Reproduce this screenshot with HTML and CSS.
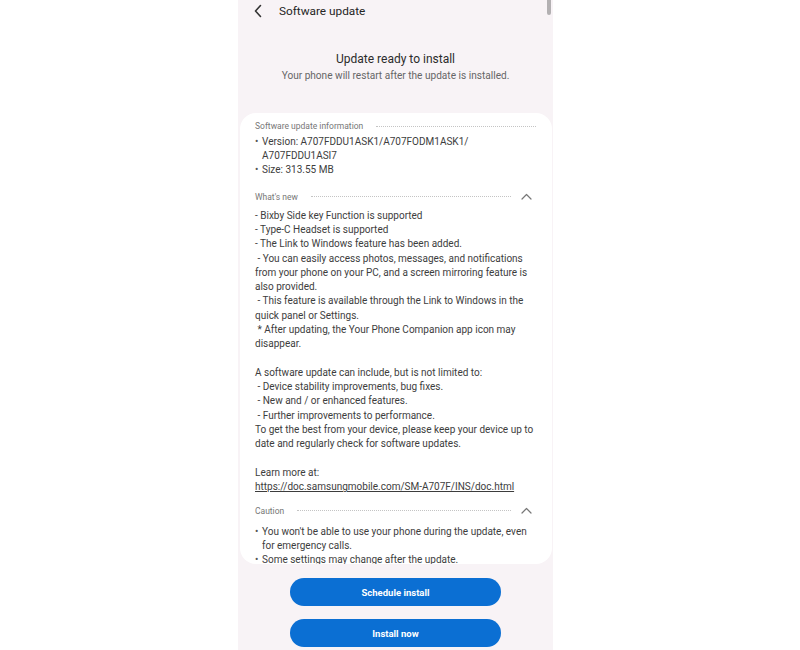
FILE: index.html
```html
<!DOCTYPE html>
<html lang="en">

<head>
    <meta charset="UTF-8">
    <meta name="viewport" content="width=device-width, initial-scale=1.0">
    <title>Software update</title>

    <link rel="stylesheet" href="styles.css">
</head>

<body>

    <div id="phone">
        <div class="scrollbar"></div>

        <div class="topbar">
            <svg class="back" width="10" height="14" viewBox="0 0 10 14">
                <path d="M7.5 1.5 L2.5 7 L7.5 12.5" fill="none" stroke="#333" stroke-width="1.6" stroke-linecap="round" stroke-linejoin="round" />
            </svg>
            <span class="title">Software update</span>
        </div>

        <div class="ready">
            <div class="ready-title">Update ready to install</div>
            <div class="ready-sub">Your phone will restart after the update is installed.</div>
        </div>

        <div class="card">
            <div class="sect first">
                <span>Software update information</span>
                <span class="dots"></span>
            </div>
            <ul class="bullets">
                <li>Version: A707FDDU1ASK1/A707FODM1ASK1/<br>A707FDDU1ASI7</li>
                <li>Size: 313.55 MB</li>
            </ul>

            <div class="sect">
                <span>What's new</span>
                <span class="dots"></span>
                <svg class="up" width="11" height="7" viewBox="0 0 11 7">
                    <path d="M1 6 L5.5 1.5 L10 6" fill="none" stroke="#777" stroke-width="1.2" stroke-linecap="round" stroke-linejoin="round" />
                </svg>
            </div>
            <div class="notes">
                - Bixby Side key Function is supported<br>
                - Type-C Headset is supported<br>
                - The Link to Windows feature has been added.<br>
                &nbsp;- You can easily access photos, messages, and notifications<br>
                from your phone on your PC, and a screen mirroring feature is<br>
                also provided.<br>
                &nbsp;- This feature is available through the Link to Windows in the<br>
                quick panel or Settings.<br>
                &nbsp;* After updating, the Your Phone Companion app icon may<br>
                disappear.<br>
                <br>
                A software update can include, but is not limited to:<br>
                &nbsp;- Device stability improvements, bug fixes.<br>
                &nbsp;- New and / or enhanced features.<br>
                &nbsp;- Further improvements to performance.<br>
                To get the best from your device, please keep your device up to<br>
                date and regularly check for software updates.<br>
                <br>
                Learn more at:<br>
                <a href="#">https://doc.samsungmobile.com/SM-A707F/INS/doc.html</a>
            </div>

            <div class="sect caution">
                <span>Caution</span>
                <span class="dots"></span>
                <svg class="up" width="11" height="7" viewBox="0 0 11 7">
                    <path d="M1 6 L5.5 1.5 L10 6" fill="none" stroke="#777" stroke-width="1.2" stroke-linecap="round" stroke-linejoin="round" />
                </svg>
            </div>
            <ul class="bullets warn">
                <li>You won't be able to use your phone during the update, even<br>for emergency calls.</li>
                <li>Some settings may change after the update.</li>
            </ul>
        </div>

        <div class="actions">
            <button class="btn">Schedule install</button>
            <button class="btn">Install now</button>
        </div>
    </div>

</body>

</html>
```

FILE: styles.css
```css
body {
    margin: 0;
    background: #fff;
    font-family: Roboto, "Liberation Sans", sans-serif;
}

#phone {
    position: relative;
    width: 315px;
    height: 650px;
    margin-left: 238px;
    background: #f8f3f6;
    overflow: hidden;
}

.scrollbar {
    position: absolute;
    top: 0;
    right: 2px;
    width: 4px;
    height: 15px;
    background: #b3b0b2;
    border-radius: 0 0 2px 2px;
}

.topbar {
    display: flex;
    align-items: center;
    height: 22px;
    padding-left: 15px;
}

.back {
    margin-right: 16px;
}

.title {
    font-size: 11.8px;
    color: #252525;
}

.ready {
    margin-top: 29px;
    text-align: center;
}

.ready-title {
    font-size: 12px;
    line-height: 17px;
    color: #2b2b2b;
}

.ready-sub {
    font-size: 10.1px;
    line-height: 13px;
    color: #666;
    margin-top: 1px;
}

.card {
    margin: 31px 1px 0 2px;
    height: 451px;
    background: #fff;
    border-radius: 16px;
    padding: 7px 16px 0 15px;
    box-sizing: border-box;
    overflow: hidden;
}

.sect {
    display: flex;
    align-items: center;
    height: 12px;
    font-size: 8.5px;
    color: #777;
    margin-top: 13px;
}

.sect.first {
    margin-top: 0;
}

.sect.caution {
    margin-top: 10px;
}

.dots {
    flex: 1;
    border-top: 1px dotted #c4c4c4;
    margin-left: 13px;
}

.up {
    margin-left: 10px;
    margin-right: 4px;
}

.bullets {
    list-style: none;
    margin: 3px 0 0;
    padding: 0;
    font-size: 10px;
    line-height: 14.2px;
    color: #3d3d3d;
}

.bullets li {
    position: relative;
    padding-left: 7px;
}

.bullets li::before {
    content: "\2022";
    position: absolute;
    left: 0;
    color: #555;
}

.bullets.warn {
    margin-top: 8px;
}

.notes {
    margin-top: 6px;
    font-size: 10px;
    line-height: 14.3px;
    color: #3d3d3d;
    white-space: nowrap;
}

.notes a {
    color: #3d3d3d;
}

.actions {
    display: flex;
    flex-direction: column;
    align-items: center;
    gap: 13px;
    margin-top: 14px;
}

.btn {
    width: 211px;
    height: 28px;
    border: none;
    border-radius: 14px;
    background: #0b6fd3;
    color: #fff;
    font-family: Roboto, "Liberation Sans", sans-serif;
    font-size: 9.5px;
    font-weight: bold;
}
```
